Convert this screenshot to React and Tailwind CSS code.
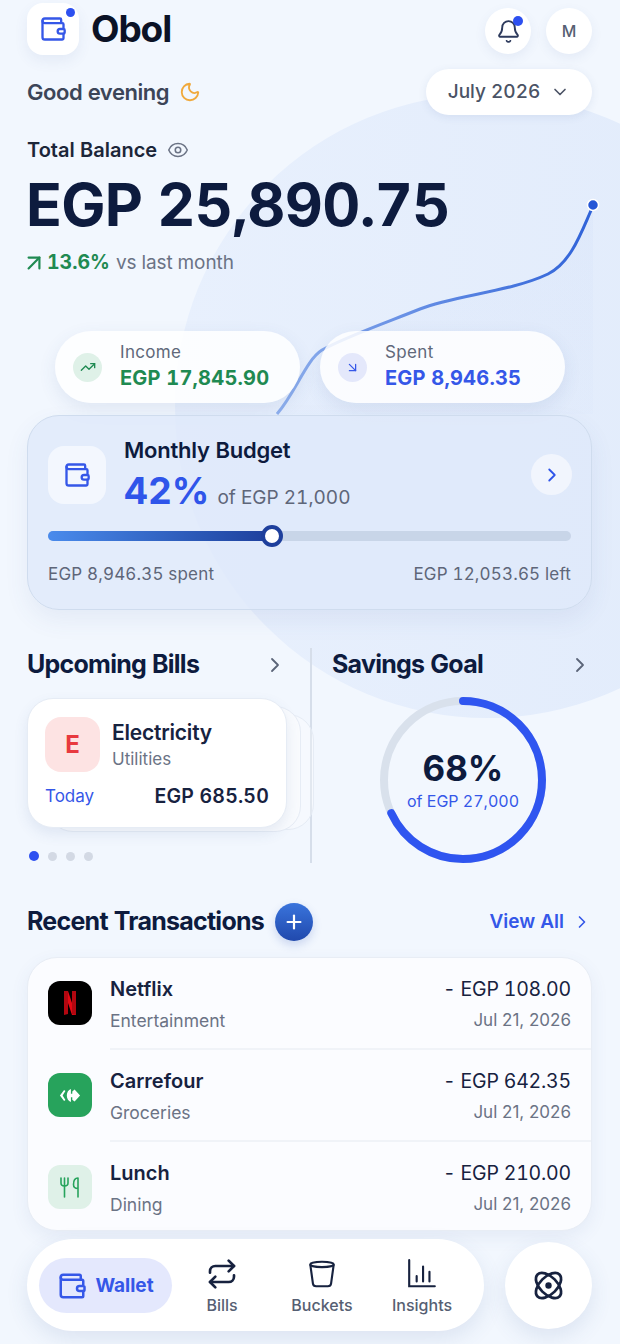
import { Wallet, Bell, Moon, Eye, ChevronDown, ChevronRight, TrendingUp, ArrowDownRight, ArrowUpRight, Plus, Repeat } from 'lucide-react';

const transactions = [
  { name: 'Netflix', category: 'Entertainment', amount: '- EGP 108.00', icon: 'netflix' },
  { name: 'Carrefour', category: 'Groceries', amount: '- EGP 642.35', icon: 'carrefour' },
  { name: 'Lunch', category: 'Dining', amount: '- EGP 210.00', icon: 'lunch' },
];

const TxIcon = ({ type }) => {
  if (type === 'netflix') {
    return (
      <div className="w-11 h-11 rounded-xl bg-black flex items-center justify-center">
        <svg width="14" height="24" viewBox="0 0 14 24">
          <path d="M1 0h4l8 24H9z" fill="#e50914" />
          <path d="M1 0h4v23l-4 1z" fill="#b20710" />
          <path d="M9 0h4v24l-4-1z" fill="#b20710" />
        </svg>
      </div>
    );
  }
  if (type === 'carrefour') {
    return (
      <div className="w-11 h-11 rounded-xl bg-[#27a35c] flex items-center justify-center">
        <svg width="22" height="15" viewBox="0 0 24 16" fill="#fff">
          <path d="M5.500 2 1 8l4.500 6 1.500-1-3-5 3-5z" />
          <path d="M13 1C10 2 8.500 5 8.500 8s1.500 6 4.500 7V10h1.500v2.500l2.500 2L23 8l-6-6.500-2.500 2V6H13z" />
        </svg>
      </div>
    );
  }
  return (
    <div className="w-11 h-11 rounded-xl bg-[#dff1e8] flex items-center justify-center">
      <svg width="22" height="24" viewBox="0 0 22 24" fill="none" stroke="#27a35c" strokeWidth="1.6" strokeLinecap="round" strokeLinejoin="round">
        <path d="M2 3v5c0 2 1.500 3 3.500 3S9 10 9 8V3" />
        <path d="M5.500 3v19" />
        <path d="M19 22V3c-3 0-4.500 3-4.500 6.500 0 2.500 1.500 4 4.500 4" />
      </svg>
    </div>
  );
};

const App = () => {
  return (
    <div className="relative w-[620px] h-[1344px] overflow-hidden bg-[#f2f7fe] font-['Inter',sans-serif] text-[#0f1b3d] tabular-nums">
      {/* background blob and balance line */}
      <div className="absolute left-[175px] top-[94px] w-[624px] h-[624px] rounded-full bg-gradient-to-r from-[#e8f0fd] to-[#e1ebfb]" />
      <svg className="absolute left-0 top-0" width="620" height="420" fill="none">
        <defs>
          <linearGradient id="line" x1="277" y1="0" x2="593" y2="0" gradientUnits="userSpaceOnUse">
            <stop offset="0" stopColor="#8fb0ee" />
            <stop offset="1" stopColor="#2f62d8" />
          </linearGradient>
          <linearGradient id="area" x1="0" y1="206" x2="0" y2="420" gradientUnits="userSpaceOnUse">
            <stop offset="0" stopColor="#2f62d8" stopOpacity="0.025" />
            <stop offset="1" stopColor="#2f62d8" stopOpacity="0.01" />
          </linearGradient>
        </defs>
        <path d="M277 414C296 392 306 360 322 350C345 337 385 323 420 309C455 295 510 292 548 274C572 262 582 230 593 206V414Z" fill="url(#area)" />
        <path d="M277 414C296 392 306 360 322 350C345 337 385 323 420 309C455 295 510 292 548 274C572 262 582 230 593 206" stroke="url(#line)" strokeWidth="3" />
        <circle cx="593" cy="205" r="5.500" fill="#2456d6" stroke="#fff" strokeWidth="1.500" />
      </svg>

      <div className="relative flex flex-col h-full pl-[27px] pr-[28px] pt-[3px]">
        {/* header */}
        <div className="flex items-center justify-between h-[52px]">
          <div className="flex items-center gap-3">
            <div className="relative w-[52px] h-[52px] rounded-2xl bg-white flex items-center justify-center shadow-[0_6px_14px_rgba(60,90,150,0.08)]">
              <Wallet size={28} color="#3557e8" strokeWidth={2} />
              <span className="absolute right-[4px] top-[5px] w-[9px] h-[9px] rounded-full bg-[#2d50f0]" />
            </div>
            <span className="text-[37px] font-bold tracking-[-0.03em] text-[#0b1226]">Obol</span>
          </div>
          <div className="flex items-center gap-[15px] mt-1">
            <div className="relative w-[46px] h-[46px] rounded-full bg-white flex items-center justify-center shadow-[0_4px_12px_rgba(60,90,150,0.08)]">
              <Bell size={25} color="#2d3a5c" strokeWidth={1.8} />
              <span className="absolute right-[8px] top-[8px] w-[10px] h-[10px] rounded-full bg-[#2d50f0]" />
            </div>
            <div className="w-[46px] h-[46px] rounded-full bg-white flex items-center justify-center text-[16px] font-medium text-[#565f73] shadow-[0_4px_12px_rgba(60,90,150,0.08)]">M</div>
          </div>
        </div>

        <div className="flex items-center justify-between mt-[14px] h-[46px]">
          <div className="flex items-center gap-[10px]">
            <span className="text-[22px] font-semibold text-[#3c4558] tracking-[-0.02em]">Good evening</span>
            <Moon size={22} color="#f0a93c" strokeWidth={2} />
          </div>
          <div className="w-[166px] h-[46px] rounded-full bg-white flex items-center justify-center gap-[10px] text-[19px] font-medium text-[#4b5365] shadow-[0_2px_8px_rgba(60,90,150,0.1)]">
            July 2026
            <ChevronDown size={20} color="#4b5365" />
          </div>
        </div>

        {/* balance */}
        <div className="flex items-center gap-[10px] mt-[21px]">
          <span className="text-[20px] leading-[28px] font-semibold text-[#1c2639]">Total Balance</span>
          <Eye size={22} color="#6b7385" strokeWidth={1.7} />
        </div>
        <div className="text-[59px] leading-[66px] font-bold text-[#0d1b3e] mt-[8px] -ml-px tracking-[-0.012em] whitespace-nowrap">EGP 25,890.75</div>
        <div className="flex items-center mt-[11px] h-7 text-[19px]">
          <ArrowUpRight size={26} color="#1f8a52" strokeWidth={2} className="-ml-[6px]" />
          <span className="text-[19.500px] font-bold text-[#1f8a52]">13.6%</span>
          <span className="text-[#6b7385] ml-[6px] tracking-[-0.005em]">vs last month</span>
        </div>

        {/* income / spent pills */}
        <div className="flex gap-5 mt-[54px] ml-[28px]">
          <div className="w-[245px] h-[72px] rounded-[36px] bg-white/85 flex items-center pl-[18px] gap-[18px] shadow-[0_6px_18px_rgba(60,90,150,0.1)]">
            <div className="w-[29px] h-[29px] rounded-full bg-[#dff1e8] flex items-center justify-center">
              <TrendingUp size={16} color="#1f8a52" />
            </div>
            <div>
              <div className="text-[17px] leading-[22px] text-[#60687a] tracking-[0.02em]">Income</div>
              <div className="text-[20px] leading-[30px] font-bold text-[#1f8a52] tracking-[0.01em]">EGP 17,845.90</div>
            </div>
          </div>
          <div className="w-[245px] h-[72px] rounded-[36px] bg-white/85 flex items-center pl-[18px] gap-[18px] shadow-[0_6px_18px_rgba(60,90,150,0.1)]">
            <div className="w-[29px] h-[29px] rounded-full bg-[#e4e8fb] flex items-center justify-center">
              <ArrowDownRight size={15} color="#3557e8" />
            </div>
            <div>
              <div className="text-[17px] leading-[22px] text-[#60687a] tracking-[0.02em]">Spent</div>
              <div className="text-[20px] leading-[30px] font-bold text-[#3557e8] tracking-[0.01em]">EGP 8,946.35</div>
            </div>
          </div>
        </div>

        {/* monthly budget */}
        <div className="mt-3 h-[195px] rounded-[32px] border border-[#cfdcee] bg-[#dfe9fa]/80 px-[20px] pt-[18px] shadow-[0_10px_24px_rgba(60,90,150,0.08)]">
          <div className="flex items-center">
            <div className="w-[58px] h-[58px] rounded-2xl bg-[#f3f7fe] flex items-center justify-center">
              <Wallet size={28} color="#3557e8" strokeWidth={2} />
            </div>
            <div className="ml-[18px] flex-1 mt-[2px]">
              <div className="text-[22px] leading-[28px] font-semibold text-[#0d1b3e] tracking-[-0.01em]">Monthly Budget</div>
              <div className="flex items-baseline gap-[8px] mt-[3px]">
                <span className="text-[37px] leading-[48px] font-bold text-[#2f55ea]">42%</span>
                <span className="text-[19px] text-[#5e6679]">of EGP 21,000</span>
              </div>
            </div>
            <div className="w-[41px] h-[41px] rounded-full bg-[#f1f5fd] flex items-center justify-center -mr-[1px]">
              <ChevronRight size={22} color="#2f55ea" />
            </div>
          </div>
          <div className="relative h-[10px] rounded-full bg-[#c8d5e8] mt-[16px]">
            <div className="h-full w-[224px] rounded-full bg-gradient-to-r from-[#4a8bec] to-[#1e3f9c]" />
            <div className="absolute left-[213px] -top-[6px] w-[22px] h-[22px] rounded-full bg-white border-[4px] border-[#1e3f9c]" />
          </div>
          <div className="flex justify-between mt-[21px] text-[17px] text-[#5e6679] tracking-[0.01em]">
            <span>EGP 8,946.35 spent</span>
            <span>EGP 12,053.65 left</span>
          </div>
        </div>

        {/* bills and savings */}
        <div className="flex mt-[38px] h-[215px]">
          <div className="w-[283px] shrink-0">
            <div className="flex items-center justify-between h-[34px] pr-[23px]">
              <span className="text-[25px] font-bold text-[#0d1b3e] tracking-[-0.03em]">Upcoming Bills</span>
              <ChevronRight size={24} color="#5b6478" strokeWidth={1.8} />
            </div>
            <div className="relative mt-4 h-[134px]">
              <div className="absolute left-[40px] top-[16px] w-[247px] h-[116px] rounded-[26px] border border-[#e6ecf5] bg-white/30" />
              <div className="absolute left-[20px] top-[8px] w-[254px] h-[126px] rounded-[26px] border border-[#e6ecf5] bg-[#f9fbfe]" />
              <div className="relative w-[260px] h-[130px] rounded-[26px] bg-white border border-[#e6ecf5] shadow-[0_6px_14px_rgba(60,90,150,0.1)] px-[17px] pt-[18px]">
                <div className="flex items-center gap-3">
                  <div className="w-[55px] h-[55px] rounded-2xl bg-[#fde3e3] flex items-center justify-center text-[24px] font-bold text-[#e8393f]">E</div>
                  <div>
                    <div className="text-[21px] leading-[28px] font-semibold text-[#17223f] tracking-[-0.01em]">Electricity</div>
                    <div className="text-[17px] leading-[24px] text-[#6b7385]">Utilities</div>
                  </div>
                </div>
                <div className="flex items-center justify-between mt-[10px] pr-[0px]">
                  <span className="text-[17px] text-[#3557e8]">Today</span>
                  <span className="text-[19.500px] font-semibold text-[#17223f] tracking-[0.01em]">EGP 685.50</span>
                </div>
              </div>
            </div>
            <div className="flex items-center gap-[9px] mt-[19px] ml-[2px]">
              <span className="w-[10px] h-[10px] rounded-full bg-[#2d50f0]" />
              <span className="w-[9px] h-[9px] rounded-full bg-[#d3d9e4]" />
              <span className="w-[9px] h-[9px] rounded-full bg-[#d3d9e4]" />
              <span className="w-[9px] h-[9px] rounded-full bg-[#d3d9e4]" />
            </div>
          </div>
          <div className="w-[2px] bg-[#d6deea] shrink-0" />
          <div className="flex-1 pl-[20px]">
            <div className="flex items-center justify-between h-[34px]">
              <span className="text-[25px] font-bold text-[#0d1b3e] tracking-[-0.03em]">Savings Goal</span>
              <ChevronRight size={24} color="#5b6478" strokeWidth={1.8} />
            </div>
            <div className="relative w-[168px] h-[168px] mt-[14px] ml-[47px]">
              <svg width="168" height="168" viewBox="0 0 168 168" fill="none">
                <circle cx="84" cy="84" r="79" stroke="#d9e1ec" strokeWidth="8" />
                <circle cx="84" cy="84" r="79" stroke="#2f55f0" strokeWidth="8" strokeLinecap="round" strokeDasharray="337.500 496.400" transform="rotate(-90 84 84)" />
              </svg>
              <div className="absolute inset-0 flex flex-col items-center justify-center">
                <span className="text-[35px] leading-[42px] font-bold text-[#0d1b3e]">68%</span>
                <span className="text-[16px] leading-[24px] text-[#3557e8]">of EGP 27,000</span>
              </div>
            </div>
          </div>
        </div>

        {/* recent transactions */}
        <div className="flex items-center mt-[40px] h-[38px]">
          <span className="text-[25px] font-bold text-[#0d1b3e] tracking-[-0.03em]">Recent Transactions</span>
          <div className="ml-[11px] w-[38px] h-[38px] rounded-full bg-gradient-to-b from-[#3a74dc] to-[#2149ad] flex items-center justify-center shadow-[0_4px_10px_rgba(40,80,180,0.2)]">
            <Plus size={22} color="#fff" strokeWidth={2.4} />
          </div>
          <span className="ml-auto text-[19px] font-semibold text-[#3557e8]">View All</span>
          <ChevronRight size={20} color="#3557e8" className="ml-[8px] mr-[0px]" />
        </div>

        <div className="mt-[16px] h-[274px] rounded-[30px] bg-[#fbfcff] border border-[#e8edf5] shadow-[0_6px_18px_rgba(60,90,150,0.08)] overflow-hidden">
          {transactions.map((t, i) => (
            <div key={t.name} className="flex h-[92px] pl-[20px]">
              <div className="pt-[23px]">
                <TxIcon type={t.icon} />
              </div>
              <div className={`flex flex-1 ml-[18px] pr-[20px] pt-[16px] ${i < 2 ? 'border-b-2 border-[#f0f3f8]' : ''}`}>
                <div className="flex-1">
                  <div className="text-[20px] leading-[30px] font-semibold text-[#17223f]">{t.name}</div>
                  <div className="text-[17.500px] leading-[26px] mt-[4px] text-[#6b7385]">{t.category}</div>
                </div>
                <div className="text-right">
                  <div className="text-[19.500px] leading-[30px] text-[#17223f] tracking-[-0.01em]">{t.amount}</div>
                  <div className="text-[17px] leading-[26px] mt-[3px] text-[#6b7385] [font-variant-numeric:normal]">Jul 21, 2026</div>
                </div>
              </div>
            </div>
          ))}
        </div>

        {/* bottom nav */}
        <div className="flex items-center justify-between mt-2">
          <div className="w-[457px] h-[92px] rounded-[46px] bg-white flex items-center pl-[12px] shadow-[0_8px_22px_rgba(60,90,150,0.12)]">
            <div className="w-[133px] h-[55px] rounded-[28px] bg-[#e4e8fd] flex items-center justify-center gap-[8px] pt-[2px]">
              <Wallet size={30} color="#3557e8" strokeWidth={2} />
              <span className="text-[19px] font-bold text-[#3557e8]">Wallet</span>
            </div>
            <div className="w-[100px] flex flex-col items-center pt-[4px]">
              <Repeat size={32} color="#17223f" strokeWidth={2} />
              <span className="text-[16px] font-medium text-[#565f73] mt-[3px]">Bills</span>
            </div>
            <div className="w-[100px] flex flex-col items-center pt-[4px]">
              <svg width="32" height="32" viewBox="0 0 30 30" fill="none" stroke="#17223f" strokeWidth="2" strokeLinejoin="round">
                <ellipse cx="15" cy="6" rx="11" ry="2.500" />
                <path d="M4 6l2.500 18c.2 1.500 1.500 2.500 3 2.500h11c1.500 0 2.800-1 3-2.500L26 6" />
              </svg>
              <span className="text-[16px] font-medium text-[#565f73] mt-[3px]">Buckets</span>
            </div>
            <div className="w-[100px] flex flex-col items-center pt-[4px]">
              <svg width="32" height="32" viewBox="0 0 30 30" fill="none" stroke="#17223f" strokeWidth="2" strokeLinecap="round">
                <path d="M3 2v24.500h24" />
                <path d="M10 17v5M16 8v14M22 13v9" />
              </svg>
              <span className="text-[16px] font-medium text-[#565f73] mt-[3px]">Insights</span>
            </div>
          </div>
          <div className="w-[87px] h-[87px] rounded-full bg-white flex items-center justify-center shadow-[0_8px_22px_rgba(60,90,150,0.12)]">
            <svg width="31" height="31" viewBox="0 0 34 34" fill="none" stroke="#17223f" strokeWidth="3">
              <ellipse cx="17" cy="17" rx="17" ry="9.500" transform="rotate(45 17 17)" />
              <ellipse cx="17" cy="17" rx="17" ry="9.500" transform="rotate(-45 17 17)" />
              <circle cx="17" cy="17" r="3.500" fill="#17223f" stroke="none" />
            </svg>
          </div>
        </div>
      </div>
    </div>
  );
};

export default App;
